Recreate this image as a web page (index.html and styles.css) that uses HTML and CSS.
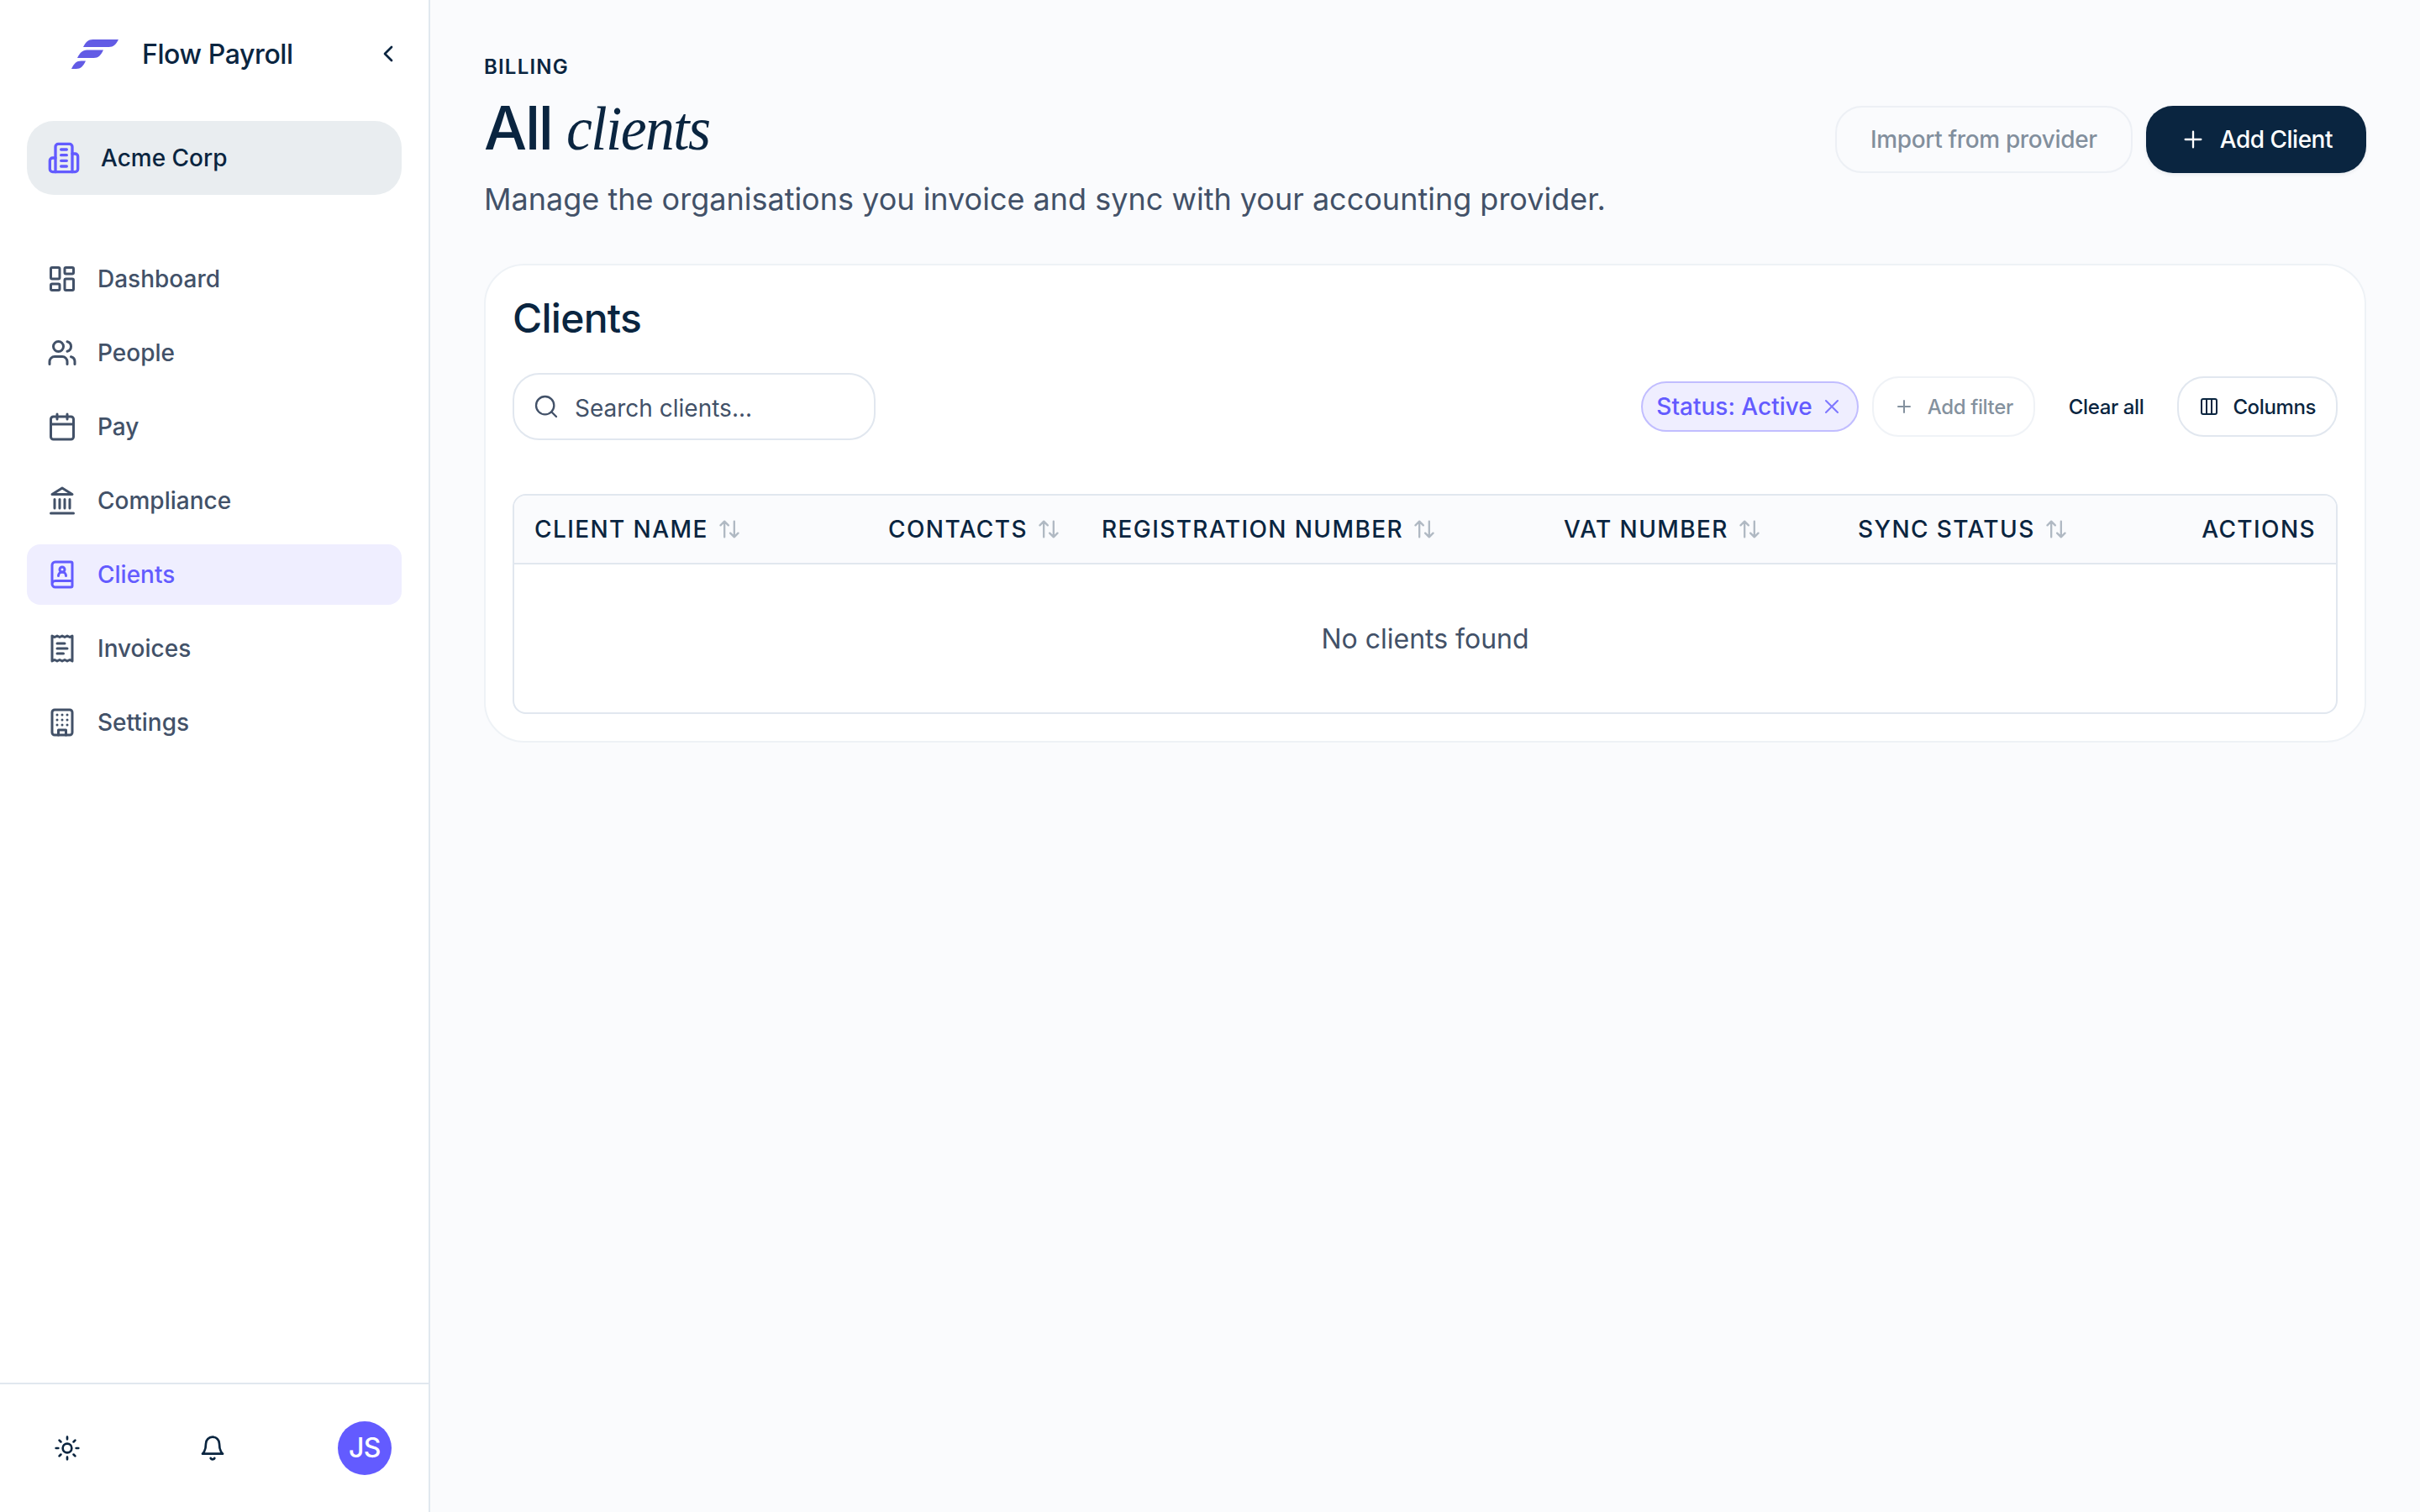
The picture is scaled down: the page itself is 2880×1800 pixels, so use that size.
FILE: index.html
```html
<!DOCTYPE html>
<html lang="en">
<head>
    <meta charset="UTF-8">
    <meta name="viewport" content="width=device-width, initial-scale=1.0">
    <title>Clients - Flow Payroll</title>
    <link rel="stylesheet" href="styles.css">
</head>
<body>
    <div class="app">
        <aside class="sidebar">
            <div class="brand">
                <svg class="logo" viewBox="0 0 56 35">
                    <path d="M14 9C17 3 20 0 25.5 0H56C53 6 50 9 44.5 9Z"/>
                    <path d="M7 22C10 16 13 12.5 18.5 12.5H38C35 19 32 22 26.5 22Z"/>
                    <path d="M0 35C3 28.500 6 25.500 11.500 25.500H17C14 32 11 35 5.500 35Z"/>
                </svg>
                <span class="brand-name">Flow Payroll</span>
                <button class="collapse">
                    <svg class="icon" viewBox="0 0 24 24"><path d="m15 18-6-6 6-6"/></svg>
                </button>
            </div>

            <button class="org">
                <svg class="icon" viewBox="0 0 24 24"><path d="M6 22V4a2 2 0 0 1 2-2h8a2 2 0 0 1 2 2v18Z"/><path d="M6 12H4a2 2 0 0 0-2 2v6a2 2 0 0 0 2 2h2"/><path d="M18 9h2a2 2 0 0 1 2 2v9a2 2 0 0 1-2 2h-2"/><path d="M10 6h4M10 10h4M10 14h4M10 18h4"/></svg>
                <span>Acme Corp</span>
            </button>

            <nav class="nav">
                <a class="nav-item">
                    <svg class="icon" viewBox="0 0 24 24"><rect width="7" height="9" x="3" y="3" rx="1"/><rect width="7" height="5" x="14" y="3" rx="1"/><rect width="7" height="9" x="14" y="12" rx="1"/><rect width="7" height="5" x="3" y="16" rx="1"/></svg>
                    <span>Dashboard</span>
                </a>
                <a class="nav-item">
                    <svg class="icon" viewBox="0 0 24 24"><path d="M16 21v-2a4 4 0 0 0-4-4H6a4 4 0 0 0-4 4v2"/><circle cx="9" cy="7" r="4"/><path d="M22 21v-2a4 4 0 0 0-3-3.870"/><path d="M16 3.130a4 4 0 0 1 0 7.750"/></svg>
                    <span>People</span>
                </a>
                <a class="nav-item">
                    <svg class="icon" viewBox="0 0 24 24"><path d="M8 2v4M16 2v4"/><rect width="18" height="18" x="3" y="4" rx="2"/><path d="M3 10h18"/></svg>
                    <span>Pay</span>
                </a>
                <a class="nav-item">
                    <svg class="icon" viewBox="0 0 24 24"><path d="M3 22h18M6 18v-7M10 18v-7M14 18v-7M18 18v-7"/><path d="M12 2l8 5H4z"/></svg>
                    <span>Compliance</span>
                </a>
                <a class="nav-item active">
                    <svg class="icon" viewBox="0 0 24 24"><path d="M15 13a3 3 0 1 0-6 0"/><path d="M4 19.500v-15A2.500 2.500 0 0 1 6.500 2H19a1 1 0 0 1 1 1v18a1 1 0 0 1-1 1H6.500a1 1 0 0 1 0-5H20"/><circle cx="12" cy="8" r="2"/></svg>
                    <span>Clients</span>
                </a>
                <a class="nav-item">
                    <svg class="icon" viewBox="0 0 24 24"><path d="M4 2v20l2-1 2 1 2-1 2 1 2-1 2 1 2-1 2 1V2l-2 1-2-1-2 1-2-1-2 1-2-1-2 1Z"/><path d="M14 8H8M16 12H8M13 16H8"/></svg>
                    <span>Invoices</span>
                </a>
                <a class="nav-item">
                    <svg class="icon" viewBox="0 0 24 24"><rect width="16" height="20" x="4" y="2" rx="2"/><path d="M9 22v-4h6v4"/><path d="M8 6h.01M12 6h.01M16 6h.01M8 10h.01M12 10h.01M16 10h.01M8 14h.01M12 14h.01M16 14h.01"/></svg>
                    <span>Settings</span>
                </a>
            </nav>

            <div class="sidebar-footer">
                <button class="icon-btn">
                    <svg class="icon" viewBox="0 0 24 24"><circle cx="12" cy="12" r="4"/><path d="M12 2v2M12 20v2M4.930 4.930l1.410 1.410M17.660 17.660l1.410 1.410M2 12h2M20 12h2M6.340 17.660l-1.410 1.410M19.070 4.930l-1.410 1.410"/></svg>
                </button>
                <button class="icon-btn">
                    <svg class="icon" viewBox="0 0 24 24"><path d="M6 8a6 6 0 0 1 12 0c0 7 3 9 3 9H3s3-2 3-9"/><path d="M10.300 21a1.940 1.940 0 0 0 3.400 0"/></svg>
                </button>
                <div class="user">
                    <div class="avatar">JS</div>
                </div>
            </div>
        </aside>

        <main class="main">
            <header class="page-header">
                <div class="page-title">
                    <div class="eyebrow">BILLING</div>
                    <h1>All <em>clients</em></h1>
                    <p class="subtitle">Manage the organisations you invoice and sync with your accounting provider.</p>
                </div>
                <div class="header-actions">
                    <button class="btn btn-outline disabled">Import from provider</button>
                    <button class="btn btn-primary">
                        <svg class="icon" viewBox="0 0 24 24"><path d="M5 12h14M12 5v14"/></svg>
                        Add Client
                    </button>
                </div>
            </header>

            <section class="card">
                <h2>Clients</h2>
                <div class="toolbar">
                    <div class="search">
                        <svg class="icon" viewBox="0 0 24 24"><circle cx="11" cy="11" r="8"/><path d="m21 21-4.300-4.300"/></svg>
                        <input type="text" placeholder="Search clients...">
                    </div>
                    <div class="filters">
                        <span class="chip">
                            Status: Active
                            <svg class="icon" viewBox="0 0 24 24"><path d="M18 6 6 18M6 6l12 12"/></svg>
                        </span>
                        <button class="btn btn-sm btn-outline disabled">
                            <svg class="icon" viewBox="0 0 24 24"><path d="M5 12h14M12 5v14"/></svg>
                            Add filter
                        </button>
                        <button class="btn btn-sm btn-ghost">Clear all</button>
                        <button class="btn btn-sm btn-outline">
                            <svg class="icon" viewBox="0 0 24 24"><rect width="18" height="18" x="3" y="3" rx="2"/><path d="M9 3v18M15 3v18"/></svg>
                            Columns
                        </button>
                    </div>
                </div>

                <div class="table-wrap">
                    <table>
                        <colgroup>
                            <col class="col-name">
                            <col class="col-contacts">
                            <col class="col-reg">
                            <col class="col-vat">
                            <col class="col-sync">
                            <col>
                        </colgroup>
                        <thead>
                            <tr>
                                <th><div class="th">CLIENT NAME <svg class="icon" viewBox="0 0 24 24"><path d="m21 16-4 4-4-4M17 20V4M3 8l4-4 4 4M7 4v16"/></svg></div></th>
                                <th><div class="th">CONTACTS <svg class="icon" viewBox="0 0 24 24"><path d="m21 16-4 4-4-4M17 20V4M3 8l4-4 4 4M7 4v16"/></svg></div></th>
                                <th><div class="th">REGISTRATION NUMBER <svg class="icon" viewBox="0 0 24 24"><path d="m21 16-4 4-4-4M17 20V4M3 8l4-4 4 4M7 4v16"/></svg></div></th>
                                <th><div class="th">VAT NUMBER <svg class="icon" viewBox="0 0 24 24"><path d="m21 16-4 4-4-4M17 20V4M3 8l4-4 4 4M7 4v16"/></svg></div></th>
                                <th><div class="th">SYNC STATUS <svg class="icon" viewBox="0 0 24 24"><path d="m21 16-4 4-4-4M17 20V4M3 8l4-4 4 4M7 4v16"/></svg></div></th>
                                <th class="right">ACTIONS</th>
                            </tr>
                        </thead>
                        <tbody>
                            <tr>
                                <td class="empty" colspan="6">No clients found</td>
                            </tr>
                        </tbody>
                    </table>
                </div>
            </section>
        </main>
    </div>
</body>
</html>
```

FILE: styles.css
```css
* {
    box-sizing: border-box;
}
body {
    margin: 0;
    font-family: Inter, "Liberation Sans", sans-serif;
    font-size: 28px;
    color: #0a2540;
    background: #fafbfd;
}
button, input {
    font: inherit;
    color: inherit;
    border: none;
    background: none;
    padding: 0;
}
.icon {
    fill: none;
    stroke: currentColor;
    stroke-width: 1.75;
    stroke-linecap: round;
    stroke-linejoin: round;
    flex-shrink: 0;
    display: block;
}
.app {
    display: flex;
    height: 100vh;
}

/* sidebar */
.sidebar {
    width: 512px;
    flex-shrink: 0;
    display: flex;
    flex-direction: column;
    background: #fff;
    border-right: 2px solid #e1e8ef;
}
.brand {
    display: flex;
    align-items: center;
    height: 128px;
    padding: 0 32px 0 85px;
}
.logo {
    width: 56px;
    height: 35px;
    fill: #625be5;
}
.brand-name {
    margin-left: 28px;
    font-size: 32px;
    font-weight: 500;
    letter-spacing: -0.4px;
}
.collapse {
    margin-left: auto;
}
.collapse .icon {
    width: 32px;
    height: 32px;
    stroke-width: 2;
}
.org {
    display: flex;
    align-items: center;
    gap: 24px;
    height: 88px;
    margin: 16px 32px 0;
    padding: 0 24px;
    border-radius: 32px;
    background: #e9edf0;
    font-weight: 500;
}
.org .icon {
    width: 40px;
    height: 40px;
    stroke-width: 2;
    color: #635bff;
}
.nav {
    display: flex;
    flex-direction: column;
    gap: 16px;
    flex: 1;
    padding: 64px 32px 0;
}
.nav-item {
    display: flex;
    align-items: center;
    gap: 24px;
    height: 72px;
    padding: 0 24px;
    border-radius: 16px;
    font-weight: 500;
    color: #425168;
}
.nav-item .icon {
    width: 36px;
    height: 36px;
    stroke-width: 2;
}
.nav-item.active {
    background: #efeeff;
    color: #635bff;
}
.sidebar-footer {
    display: flex;
    align-items: center;
    justify-content: space-between;
    height: 154px;
    padding: 0 36px 0 48px;
    border-top: 2px solid #e1e8ef;
}
.icon-btn {
    padding: 16px;
}
.icon-btn .icon {
    width: 32px;
    height: 32px;
    stroke-width: 2;
}
.user {
    padding: 8px;
}
.avatar {
    width: 64px;
    height: 64px;
    border-radius: 50%;
    background: #635bff;
    color: #fff;
    font-size: 32px;
    font-weight: 500;
    line-height: 64px;
    letter-spacing: -0.6px;
    text-align: center;
}

/* page */
.main {
    flex: 1;
    padding: 64px;
}
.page-header {
    display: flex;
    justify-content: space-between;
    align-items: center;
    height: 204px;
}
.page-title {
    align-self: flex-start;
}
.eyebrow {
    font-size: 24px;
    line-height: 32px;
    font-weight: 600;
    letter-spacing: 1.2px;
}
h1 {
    margin: 16px 0 0;
    font-size: 72px;
    line-height: 80px;
    font-weight: 500;
    letter-spacing: -2.16px;
}
h1 em {
    display: inline-block;
    font-family: "Liberation Serif", serif;
    font-size: 74px;
    line-height: 72px;
    font-weight: 400;
    letter-spacing: -1.7px;
    transform: scaleX(0.94);
    transform-origin: left;
}
.subtitle {
    margin: 17px 0 0;
    font-size: 36px;
    line-height: 56px;
    color: #425168;
}
.header-actions {
    display: flex;
    gap: 16px;
}
.btn {
    display: flex;
    align-items: center;
    gap: 16px;
    height: 80px;
    padding: 0 40px;
    border-radius: 32px;
    font-weight: 500;
    letter-spacing: -0.35px;
    white-space: nowrap;
}
.btn .icon {
    width: 32px;
    height: 32px;
}
.btn-outline {
    border: 2px solid #e1e7ef;
}
.btn-primary {
    background: #0a2540;
    color: #fff;
    letter-spacing: -0.5px;
    box-shadow: 0 2px 4px rgba(10, 37, 64, 0.08);
}
.btn-sm {
    height: 72px;
    padding: 0 24px;
    font-size: 24px;
    letter-spacing: -0.38px;
}
.btn-sm .icon {
    width: 24px;
    height: 24px;
    stroke-width: 2;
}
.disabled {
    opacity: 0.5;
}

/* clients card */
.card {
    margin-top: 46px;
    padding: 32px;
    background: #fff;
    border: 2px solid #eef2f6;
    border-radius: 48px;
}
h2 {
    margin: 0;
    font-size: 48px;
    line-height: 62px;
    font-weight: 500;
    letter-spacing: -0.72px;
}
.toolbar {
    display: flex;
    align-items: center;
    justify-content: space-between;
    margin: 34px 0 64px;
}
.search {
    display: flex;
    align-items: center;
    gap: 18px;
    width: 432px;
    height: 80px;
    padding: 0 22px;
    border: 2px solid #e1e7ef;
    border-radius: 32px;
    color: #425168;
}
.search .icon {
    width: 32px;
    height: 32px;
}
.search input {
    min-width: 0;
    flex: 1;
    padding-top: 3px;
}
.search input::placeholder {
    color: #425168;
    opacity: 1;
}
.filters {
    display: flex;
    align-items: center;
    gap: 16px;
}
.chip {
    display: flex;
    align-items: center;
    gap: 9px;
    height: 60px;
    padding: 0 16px;
    border: 2px solid #c1bdff;
    border-radius: 30px;
    background: #efeeff;
    color: #635bff;
    font-weight: 500;
}
.chip .icon {
    width: 28px;
    height: 28px;
    opacity: 0.8;
}
.table-wrap {
    border: 2px solid #e1e7ef;
    border-radius: 16px;
    overflow: hidden;
}
table {
    width: 100%;
    table-layout: fixed;
    border-spacing: 0;
}
.col-name {
    width: 421px;
}
.col-contacts {
    width: 254px;
}
.col-reg {
    width: 550px;
}
.col-vat {
    width: 350px;
}
.col-sync {
    width: 335px;
}
th {
    height: 82px;
    padding: 0 24px;
    background: #fafbfd;
    border-bottom: 2px solid #e1e7ef;
    font-size: 28px;
    font-weight: 500;
    letter-spacing: 1.4px;
    text-align: left;
    white-space: nowrap;
}
.th {
    display: flex;
    align-items: center;
    gap: 11px;
}
.th .icon {
    width: 28px;
    height: 28px;
    stroke-width: 2;
    opacity: 0.3;
}
th.right {
    text-align: right;
}
td.empty {
    height: 176px;
    padding: 0;
    font-size: 32px;
    color: #425168;
    text-align: center;
}
```
